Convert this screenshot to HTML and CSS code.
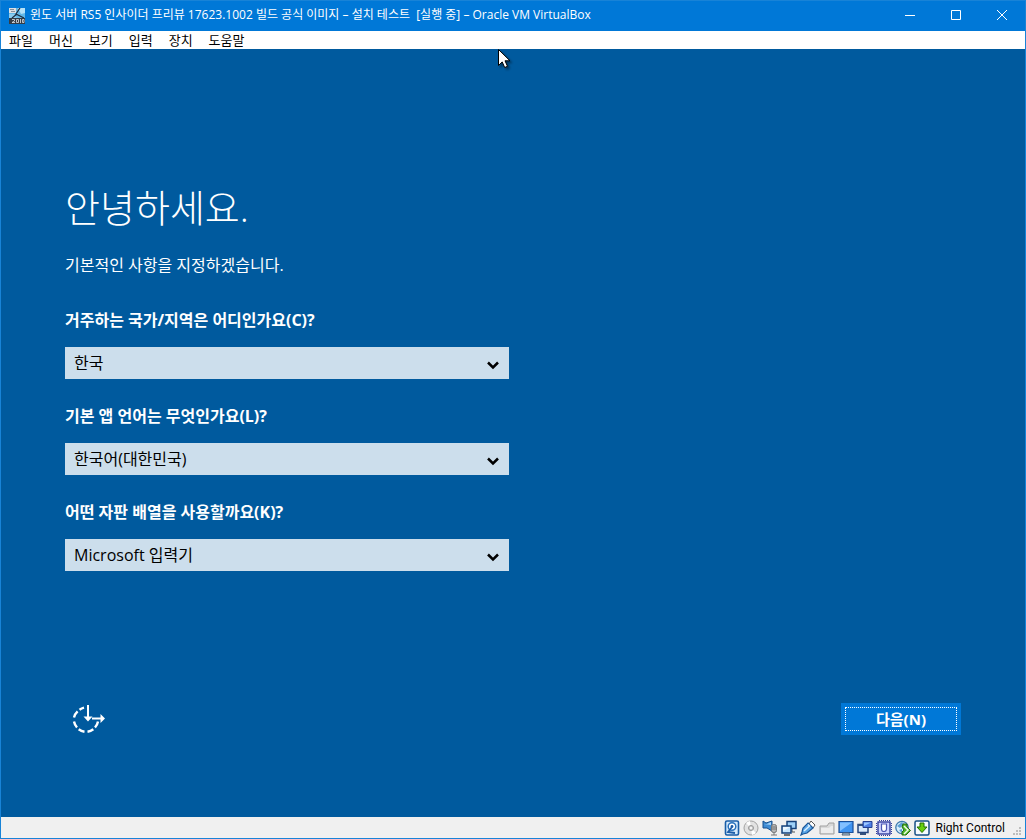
FILE: index.html
```html
<!DOCTYPE html>
<html lang="ko">
<head>
<meta charset="utf-8">
<title>Oracle VM VirtualBox</title>
<link rel="stylesheet" href="styles.css">
</head>
<body>
<div class="window">
  <header class="titlebar">
    <svg class="app-icon" viewBox="0 0 16 16" aria-hidden="true">
      <path d="M0 0h16v16H0z" fill="#3d4c5c"/>
      <path d="M7 0h9v10H0V5z" fill="#62b7e6"/>
      <path d="M9 0h7v5l-4 1z" fill="#b5e2f8"/><path d="M0 6h5l3 4H0z" fill="#8acdf0"/>
      <path d="M0 0h7v5H0z" fill="#dcdfe3"/><path d="M1 1h4v1H1zM2 3h4v1H2z" fill="#88909a"/>
      <path d="M11 0L7 6l8 4M8 6L3 10" stroke="#1a2a3f" stroke-width="1.2" fill="none"/>
      <path d="M0 10h16v6H0z" fill="#343d47"/>
      <path d="M3 11.5h2.5v1.5L3 14.5h3M7.5 11.5h2v3h-2zM11.5 11v4M13.5 11.5h1.5v3h-1.500z" stroke="#dfe5ea" stroke-width=".8" fill="none"/>
    </svg>
    <h1 class="title">윈도 서버 RS5 인사이더 프리뷰 17623.1002 빌드 공식 이미지 – 설치 테스트 &nbsp;[실행 중] – Oracle VM VirtualBox</h1>
    <div class="window-buttons">
      <button class="window-button" aria-label="최소화"><svg viewBox="0 0 10 10"><path d="M0 5.5h10"/></svg></button>
      <button class="window-button" aria-label="최대화"><svg viewBox="0 0 10 10"><path d="M.5.5h9v9h-9z"/></svg></button>
      <button class="window-button" aria-label="닫기"><svg viewBox="0 0 10 10"><path d="M0 0l10 10M10 0L0 10"/></svg></button>
    </div>
  </header>
  <nav class="menubar">
    <button class="menu">파일</button><button class="menu">머신</button><button class="menu">보기</button><button class="menu">입력</button><button class="menu">장치</button><button class="menu">도움말</button>
  </nav>
  <main class="screen">
    <form class="setup">
      <h2 class="greeting">안녕하세요.</h2>
      <p class="intro">기본적인 사항을 지정하겠습니다.</p>
      <div class="field">
        <label class="label" for="region">거주하는 국가/지역은 어디인가요(C)?</label>
        <div class="select-box">
          <select class="select" id="region"><option>한국</option></select>
          <svg class="chevron" viewBox="0 0 12 9" aria-hidden="true"><path d="M1 1.5l5 5 5-5"/></svg>
        </div>
      </div>
      <div class="field">
        <label class="label" for="language">기본 앱 언어는 무엇인가요(L)?</label>
        <div class="select-box">
          <select class="select" id="language"><option>한국어(대한민국)</option></select>
          <svg class="chevron" viewBox="0 0 12 9" aria-hidden="true"><path d="M1 1.5l5 5 5-5"/></svg>
        </div>
      </div>
      <div class="field">
        <label class="label" for="keyboard">어떤 자판 배열을 사용할까요(K)?</label>
        <div class="select-box">
          <select class="select" id="keyboard"><option>Microsoft 입력기</option></select>
          <svg class="chevron" viewBox="0 0 12 9" aria-hidden="true"><path d="M1 1.5l5 5 5-5"/></svg>
        </div>
      </div>
    </form>
    <div class="actions">
      <button class="ease" type="button" aria-label="접근성">
        <svg viewBox="0 0 34 32" aria-hidden="true">
          <g fill="none" stroke="#fff" stroke-width="2.4">
            <path d="M12 4.600A12.300 12.300 0 0 0 7.500 6.700M5.600 8.300A12.300 12.300 0 0 0 2 14.500M2 18.500A12.300 12.300 0 0 0 5 24.500M6.700 26.200A12.300 12.300 0 0 0 12.500 28.800M15.500 28.800A12.300 12.300 0 0 0 21.300 26.200M23 24.500A12.300 12.300 0 0 0 26 18.500"/>
            <path d="M16 2v12M20 15.500h10" stroke-width="2"/>
          </g>
          <path d="M11.500 13.500h9L16 18.500zM28.500 11v9l4.500-4.500z" fill="#fff"/>
        </svg>
      </button>
      <button class="next" type="button"><span class="next-text">다음(N)</span></button>
    </div>
    <svg class="pointer" viewBox="0 0 14 20" aria-hidden="true"><path d="M.5.5v16l3.7-3.6 2.5 5.6 2.8-1.2L7 11.800h5z" fill="#fff" stroke="#000"/></svg>
  </main>
  <footer class="statusbar">
    <div class="indicators">
      <svg viewBox="0 0 16 16"><rect x="1.500" y="1" width="13" height="14" rx="1.500" fill="#d5eafc" stroke="#1a5ea8" stroke-width="1.600"/><circle cx="8" cy="6.500" r="3.800" fill="#fff" stroke="#2a72bd" stroke-width="1.500"/><circle cx="8" cy="6.500" r="1.400" fill="#1d5da8"/><path d="M8 7l-4 5 7 1" fill="none" stroke="#1d5da8" stroke-width="1.800"/></svg>
      <svg viewBox="0 0 16 16"><circle cx="8" cy="8" r="7" fill="#e2e2e2" stroke="#a2a2a2"/><path d="M8 8L3 3a7 7 0 0 1 4-2zM8 8l5 5a7 7 0 0 1-4 2z" fill="#fff"/><circle cx="8" cy="8" r="2.500" fill="#d0d0d0" stroke="#999"/><circle cx="8" cy="8" r="1" fill="#fff"/></svg>
      <svg viewBox="0 0 16 16"><path d="M1 1l3 2 6-2v10L5 8H1z" fill="#3e8bd3" stroke="#174f8e"/><path d="M2 4h3l4-2v3z" fill="#a8d6fa"/><rect x="9.500" y="4.500" width="5" height="8" rx="2" fill="#b5b5b5" stroke="#777"/><path d="M10 7h4M10 9h4M12 12v3M9 15h6" stroke="#777"/></svg>
      <svg viewBox="0 0 16 16"><path d="M6 1.500h9v7H6z" fill="#9ed0f8" stroke="#16417b" stroke-width="1.500"/><path d="M11 9v3h3" fill="none" stroke="#555"/><path d="M1 6h9v7H1z" fill="#c4e5ff" stroke="#16417b" stroke-width="1.500"/><path d="M3 15h6" stroke="#444" stroke-width="1.500"/><path d="M2 7h7l-7 4z" fill="#eef8ff"/></svg>
      <svg viewBox="0 0 16 16"><path d="M11 1l4 4-2 3-4-4z" fill="#fff" stroke="#555"/><path d="M8 3l5 5-6 5-4 1-2 1 1-3 1-4z" fill="#5ba6e8" stroke="#1b5698" stroke-width="1.200"/><path d="M8 4.500l1.500 1.500L4 11" fill="none" stroke="#d9f0ff" stroke-width="1.500"/></svg>
      <svg viewBox="0 0 16 16"><path d="M1 14V6h7l2-3h5v11z" fill="#d8d8d8" stroke="#a0a0a0"/><path d="M2 8h8l2-2h2v7H2z" fill="#ececec"/></svg>
      <svg viewBox="0 0 16 16"><path d="M1 1.500h14v11H1z" fill="#3f94f1" stroke="#194f99" stroke-width="1.200"/><path d="M2 2.500h12L2 11z" fill="#83c0ff"/><path d="M5 13h6l1 2H4z" fill="#a9c5e0" stroke="#567"/></svg>
      <svg viewBox="0 0 16 16"><path d="M1 4.500h10v8H1z" fill="#d8e9fa" stroke="#24457e" stroke-width="1.500"/><path d="M1 4h10v2H1zM3 13h6v2H3z" fill="#34517c"/><path d="M6 1.500h9v6H6z" fill="#4d7fe5" stroke="#233f91"/><path d="M7 2.500h7L7 6z" fill="#9cc7ff"/></svg>
      <svg viewBox="0 0 16 16"><rect x="2" y="2" width="12" height="12" fill="#cfd5ff" stroke="#343e9f" stroke-width="1.400"/><path d="M3 .5h11M3 15.500h11M.5 3v11M15.500 3v11" stroke="#343e9f" stroke-dasharray="1 1"/><path d="M5.500 4v5a2.500 2.500 0 0 0 5 0V4z" fill="#fff" stroke="#4d57b5" stroke-width="1.200"/></svg>
      <svg viewBox="0 0 16 16"><circle cx="7" cy="7.500" r="6.200" fill="#d8edfc" stroke="#3c79ad" stroke-width="1.300"/><path d="M2 6l5-4 2 2-4 4zM4 10l3-1v4z" fill="#5c9fd3"/><path d="M8 4h4v3l3.500 3.500L11 15H7v-3l2-2-2-3z" fill="#51b529" stroke="#246c11"/><path d="M9 6l4 4-4 4" fill="none" stroke="#efffe6" stroke-width="1.500"/></svg>
      <svg viewBox="0 0 16 16"><rect x="1" y="1" width="14" height="14" rx="1.500" fill="#f5fbff" stroke="#174f85" stroke-width="1.500"/><path d="M6 3h4v4h3l-5 5.500L3 7h3z" fill="#69cf0f" stroke="#257000"/></svg>
    </div>
    <span class="host-key">Right Control</span>
    <svg class="grip" viewBox="0 0 9 9" aria-hidden="true"><path d="M6 0h2v2H6zM3 3h2v2H3zM6 3h2v2H6zM0 6h2v2H0zM3 6h2v2H3zM6 6h2v2H6z" fill="#bdbdbd"/></svg>
  </footer>
</div>
</body>
</html>
```
FILE: styles.css
```css
* {
  box-sizing: border-box;
}

body {
  margin: 0;
  font-family: "Open Sans", "Noto Sans CJK KR", sans-serif;
}

button,
select {
  margin: 0;
  padding: 0;
  border: 0;
  border-radius: 0;
  background: none;
  color: inherit;
  font: inherit;
}

svg {
  display: block;
}

.window {
  display: flex;
  flex-direction: column;
  min-height: 100vh;
  border: 1px solid #1883d7;
  background: #005a9e;
}

.titlebar {
  display: flex;
  align-items: center;
  height: 30px;
  padding-left: 8px;
  background: #0078d7;
  color: #fff;
}

.app-icon {
  width: 16px;
  height: 16px;
  flex: none;
}

.title {
  flex: 1;
  margin: 0 0 3px 5px;
  font-size: 12px;
  font-weight: 400;
  line-height: 18px;
  white-space: nowrap;
}

.window-buttons {
  display: flex;
  height: 28px;
  align-self: flex-start;
}

.window-button {
  display: flex;
  align-items: center;
  justify-content: center;
  width: 46px;
}

.window-button svg {
  width: 10px;
  height: 10px;
  fill: none;
  stroke: #fff;
}

.menubar {
  display: flex;
  height: 18px;
  background: #fff;
  color: #000;
  font-size: 13px;
  line-height: 18px;
}

.menu {
  padding: 0 8px;
}

.screen {
  position: relative;
  display: flex;
  flex: 1;
  flex-direction: column;
  justify-content: space-between;
  padding: 128px 64px 82px;
  color: #fff;
  font-size: 16px;
  line-height: 24px;
}

.setup {
  max-width: 444px;
}

.greeting {
  margin: 0;
  font-size: 38px;
  font-weight: 300;
  line-height: 60px;
}

.intro {
  margin: 16px 0 31px;
}

.field {
  margin-bottom: 25px;
}

.label {
  display: block;
  margin-bottom: 15px;
  font-weight: 700;
}

.select-box {
  position: relative;
}

.select {
  display: block;
  width: 100%;
  height: 32px;
  padding: 0 32px 0 9px;
  appearance: none;
  background: #ccdeec;
  color: #000;
}

.chevron {
  position: absolute;
  top: 14px;
  right: 10px;
  width: 12px;
  height: 9px;
  fill: none;
  stroke: #000;
  stroke-width: 2.5;
  pointer-events: none;
}

.actions {
  display: flex;
  align-items: center;
  justify-content: space-between;
}

.ease {
  padding-left: 7px;
}

.ease svg {
  width: 34px;
  height: 32px;
}

.next {
  width: 120px;
  height: 32px;
  padding: 4px;
  background: #0078d7;
  font-size: 15px;
  font-weight: 700;
}

.next-text {
  display: block;
  border: 1px dotted #fff;
  line-height: 22px;
}

.pointer {
  position: absolute;
  top: 0;
  left: 497px;
  width: 14px;
  height: 20px;
  filter: drop-shadow(2px 2px 1px rgba(0, 0, 0, 0.4));
}

.statusbar {
  display: flex;
  align-items: center;
  justify-content: flex-end;
  height: 21px;
  background: #f0f0f0;
  color: #000;
  font-size: 12px;
}

.indicators {
  display: flex;
  gap: 3px;
}

.indicators svg {
  width: 16px;
  height: 16px;
}

.host-key {
  margin: 0 8px 0 6px;
  font-family: Roboto, sans-serif;
}

.grip {
  align-self: flex-end;
  width: 9px;
  height: 9px;
  margin: 0 3px 2px 0;
}
```
